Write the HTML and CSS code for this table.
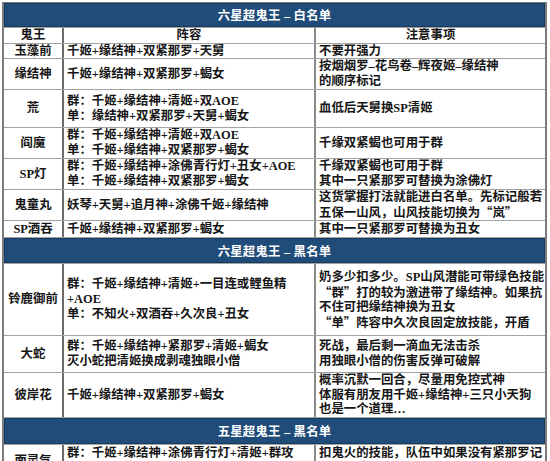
FILE: index.html
```html
<!DOCTYPE html>
<html lang="zh-CN">
<head>
<meta charset="utf-8">
<title>超鬼王阵容</title>
<link rel="stylesheet" href="styles.css">
</head>
<body>
<div class="sheet">
  <div class="bar r-bar1">六星超鬼王 – 白名单</div>

  <div class="cell name head r-head"><div class="ln">鬼王</div></div>
  <div class="cell team head r-head"><div class="ln">阵容</div></div>
  <div class="cell note head r-head"><div class="ln">注意事项</div></div>

  <div class="cell name r-1"><div class="ln">玉藻前</div></div>
  <div class="cell team r-1"><div class="ln">千姬+缘结神+双紧那罗+天舅</div></div>
  <div class="cell note r-1"><div class="ln">不要开强力</div></div>

  <div class="cell name r-2"><div class="ln">缘结神</div></div>
  <div class="cell team r-2"><div class="ln">千姬+缘结神+双紧那罗+蝎女</div></div>
  <div class="cell note r-2"><div class="ln">按烟烟罗–花鸟卷–辉夜姬–缘结神</div><div class="ln">的顺序标记</div></div>

  <div class="cell name r-2b"><div class="ln">荒</div></div>
  <div class="cell team r-2b"><div class="ln">群：千姬+缘结神+清姬+双AOE</div><div class="ln">单：缘结神+双紧那罗+天舅+蝎女</div></div>
  <div class="cell note r-2b"><div class="ln">血低后天舅换SP清姬</div></div>

  <div class="cell name r-2"><div class="ln">阎魔</div></div>
  <div class="cell team r-2"><div class="ln">群：千姬+缘结神+清姬+双AOE</div><div class="ln">单：千姬+缘结神+双紧那罗+蝎女</div></div>
  <div class="cell note r-2"><div class="ln">千缘双紧蝎也可用于群</div></div>

  <div class="cell name r-2"><div class="ln">SP灯</div></div>
  <div class="cell team r-2"><div class="ln">群：千姬+缘结神+涂佛青行灯+丑女+AOE</div><div class="ln">单：千姬+缘结神+双紧那罗+蝎女</div></div>
  <div class="cell note r-2"><div class="ln">千缘双紧蝎也可用于群</div><div class="ln">其中一只紧那罗可替换为涂佛灯</div></div>

  <div class="cell name r-2"><div class="ln">鬼童丸</div></div>
  <div class="cell team r-2"><div class="ln">妖琴+天舅+追月神+涂佛千姬+缘结神</div></div>
  <div class="cell note r-2"><div class="ln">这货掌握打法就能进白名单。先标记般若</div><div class="ln">五保一山风，山风技能切换为<span class="cq">“</span>岚<span class="cq">”</span></div></div>

  <div class="cell name r-1b"><div class="ln">SP酒吞</div></div>
  <div class="cell team r-1b"><div class="ln">千姬+缘结神+双紧那罗+蝎女</div></div>
  <div class="cell note r-1b"><div class="ln">其中一只紧那罗可替换为丑女</div></div>

  <div class="bar r-bar">六星超鬼王 – 黑名单</div>

  <div class="cell name r-4"><div class="ln">铃鹿御前</div></div>
  <div class="cell team r-4"><div class="ln">群：千姬+缘结神+清姬+一目连或鲤鱼精</div><div class="ln">+AOE</div><div class="ln">单：不知火+双酒吞+久次良+丑女</div></div>
  <div class="cell note r-4"><div class="ln">奶多少扣多少。SP山风潜能可带绿色技能</div><div class="ln"><span class="cq">“</span>群<span class="cq">”</span>打的较为激进带了缘结神。如果抗</div><div class="ln">不住可把缘结神换为丑女</div><div class="ln"><span class="cq">“</span>单<span class="cq">”</span>阵容中久次良固定放技能，开盾</div></div>

  <div class="cell name r-2c"><div class="ln">大蛇</div></div>
  <div class="cell team r-2c"><div class="ln">群：千姬+缘结神+紧那罗+清姬+蝎女</div><div class="ln">灭小蛇把清姬换成剥魂独眼小僧</div></div>
  <div class="cell note r-2c"><div class="ln">死战，最后剩一滴血无法击杀</div><div class="ln">用独眼小僧的伤害反弹可破解</div></div>

  <div class="cell name r-3"><div class="ln">彼岸花</div></div>
  <div class="cell team r-3"><div class="ln">千姬+缘结神+双紧那罗+蝎女</div></div>
  <div class="cell note r-3"><div class="ln">概率沉默一回合，尽量用免控式神</div><div class="ln">体服有朋友用千姬+缘结神+三只小天狗</div><div class="ln">也是一个道理…</div></div>

  <div class="bar r-bar3">五星超鬼王 – 黑名单</div>

  <div class="cell name r-last"><div class="ln">面灵气</div></div>
  <div class="cell team r-last"><div class="ln">群：千姬+缘结神+涂佛青行灯+清姬+群攻</div><div class="ln">单：千姬+缘结神+双紧那罗+蝎女</div></div>
  <div class="cell note r-last"><div class="ln">扣鬼火的技能，队伍中如果没有紧那罗记</div><div class="ln">得带上清姬</div></div>
</div>
</body>
</html>
```

FILE: styles.css
```css
html, body {
  margin: 0;
  padding: 0;
  background: #ffffff;
}

body {
  font-family: "Liberation Serif", "Noto Sans CJK SC", serif;
  font-weight: 700;
  font-size: 12.4px;
  color: #161616;
  overflow: hidden;
}

.sheet {
  margin: 2px 0 0 2px;
  width: 541px;
  display: grid;
  grid-template-columns: 58px 250px 229px;
  column-gap: 2px;
  row-gap: 1px;
  background: #a3a3a3;
  border: 2px solid #7c7c7c;
  border-top-width: 1px;
}

.cell {
  background: #ffffff;
  display: flex;
  flex-direction: column;
  justify-content: center;
  padding: 0 3px;
  overflow: hidden;
  white-space: nowrap;
}

.cell.name {
  align-items: center;
  padding: 0;
  box-shadow: 2px 0 0 #6c6c6c;
}

.cell.team {
  box-shadow: 2px 0 0 #8a8a8a;
}

.cell.head {
  align-items: center;
}

.ln {
  height: 15px;
  line-height: 14px;
}

.bar {
  grid-column: 1 / -1;
  background: #1f4c79;
  color: #ffffff;
  display: flex;
  align-items: center;
  justify-content: center;
  box-shadow: inset 0 0 0 1px #173a5f;
  letter-spacing: 0.2px;
}

.cq {
  font-family: "Noto Sans CJK SC", sans-serif;
}

.r-bar1 { height: 24px; }
.r-head { height: 15px; }
.r-1 { height: 14px; }
.r-1b { height: 16px; }
.r-2 { height: 30px; }
.r-2b { height: 37px; }
.r-2c { height: 36px; }
.r-3 { height: 44px; }
.r-4 { height: 71px; }
.r-bar { height: 25px; }
.r-bar3 { height: 26px; }
.r-last { height: 32px; }
```
